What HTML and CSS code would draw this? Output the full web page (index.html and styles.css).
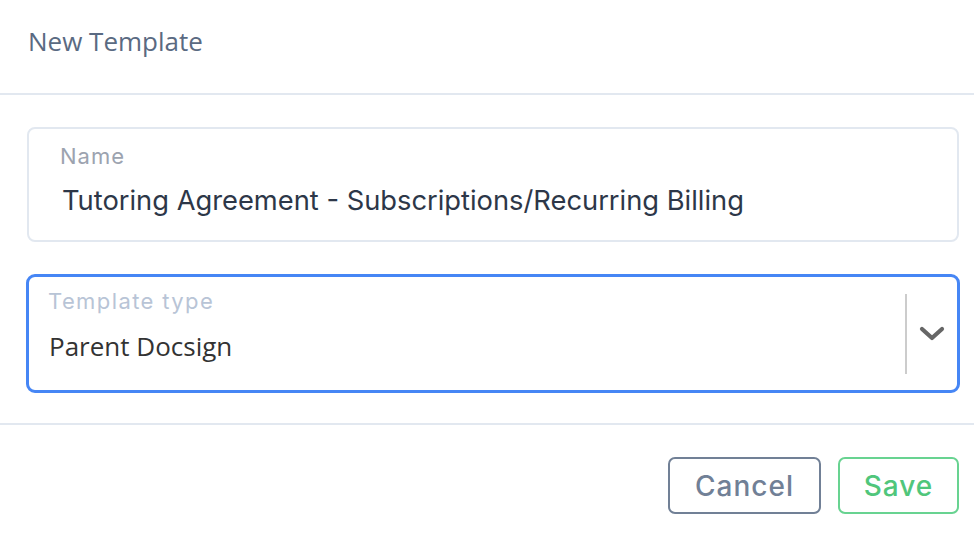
FILE: index.html
```html
<!DOCTYPE html>
<html lang="en">
<head>
<meta charset="utf-8">
<title>New Template</title>
<link rel="stylesheet" href="styles.css">
</head>
<body>
<div class="modal">
  <header class="modal-header">
    <h1 class="modal-title">New Template</h1>
  </header>
  <section class="modal-body">
    <div class="field">
      <label class="field-label">Name</label>
      <div class="field-value">Tutoring Agreement - Subscriptions/Recurring Billing</div>
    </div>
    <div class="select">
      <div class="select-main">
        <label class="select-label">Template type</label>
        <div class="select-value">Parent Docsign</div>
      </div>
      <div class="select-indicators">
        <span class="select-sep"></span>
        <svg class="chevron" width="26" height="16" viewBox="0 0 26 16" aria-hidden="true">
          <path d="M3 3 L13 12 L23 3" fill="none" stroke="#666666" stroke-width="4.2" stroke-linecap="round" stroke-linejoin="round"/>
        </svg>
      </div>
    </div>
  </section>
  <footer class="modal-footer">
    <button class="btn btn-cancel">Cancel</button>
    <button class="btn btn-save">Save</button>
  </footer>
</div>
</body>
</html>
```

FILE: styles.css
```css
html, body {
  margin: 0;
  padding: 0;
  background: #ffffff;
}

.modal {
  width: 974px;
  height: 536px;
  display: flex;
  flex-direction: column;
}

.modal-header {
  display: flex;
  align-items: center;
  padding-left: 28px;
  border-bottom: 2px solid #e2e8f0;
  box-sizing: border-box;
  height: 95px;
  padding-bottom: 11px;
}

.modal-title {
  margin: 0;
  font-family: "Open Sans", sans-serif;
  font-weight: 400;
  font-size: 26px;
  line-height: 36px;
  color: #5a6a82;
}

.modal-body {
  padding: 32px 14px 30px 26px;
  display: flex;
  flex-direction: column;
  gap: 32px;
  border-bottom: 2px solid #e2e8f0;
}

.field {
  margin: 0 1px;
  height: 115px;
  box-sizing: border-box;
  border: 2px solid #e2e8f0;
  border-radius: 8px;
  padding: 14px 0 0 31px;
  display: flex;
  flex-direction: column;
}

.field-label {
  font-family: Inter, sans-serif;
  font-size: 22px;
  line-height: 26px;
  color: #9ca3af;
  letter-spacing: 1px;
}

.field-value {
  margin-top: 15px;
  margin-left: 2px;
  font-family: Inter, sans-serif;
  font-size: 27.3px;
  line-height: 34px;
  color: #2d3748;
}

.select {
  height: 119px;
  box-sizing: border-box;
  border: 3px solid #4686f5;
  border-radius: 9px;
  display: flex;
  align-items: stretch;
}

.select-main {
  flex: 1;
  padding: 11px 0 0 19px;
  display: flex;
  flex-direction: column;
}

.select-label {
  font-family: Inter, sans-serif;
  font-size: 22px;
  line-height: 26px;
  color: #b8c4d6;
  letter-spacing: 1.4px;
}

.select-value {
  margin-top: 15px;
  margin-left: 1px;
  font-family: "Open Sans", sans-serif;
  font-size: 26px;
  line-height: 34px;
  color: #333333;
}

.select-indicators {
  display: flex;
  align-items: center;
  padding: 0 12px 0 0;
}

.select-sep {
  width: 2px;
  height: 80px;
  background: #cccccc;
  margin-right: 12px;
}

.chevron {
  display: block;
}

.modal-footer {
  display: flex;
  justify-content: flex-end;
  gap: 17px;
  padding: 32px 15px 0 0;
}

.btn {
  height: 57px;
  box-sizing: border-box;
  background: #ffffff;
  border-radius: 7px;
  font-family: Inter, sans-serif;
  font-size: 28px;
  font-weight: 500;
  letter-spacing: 1px;
  padding: 0;
  cursor: pointer;
}

.btn-cancel {
  width: 153px;
  border: 2px solid #718096;
  color: #718096;
}

.btn-save {
  width: 121px;
  border: 2px solid #68d391;
  color: #50c67b;
}
```
